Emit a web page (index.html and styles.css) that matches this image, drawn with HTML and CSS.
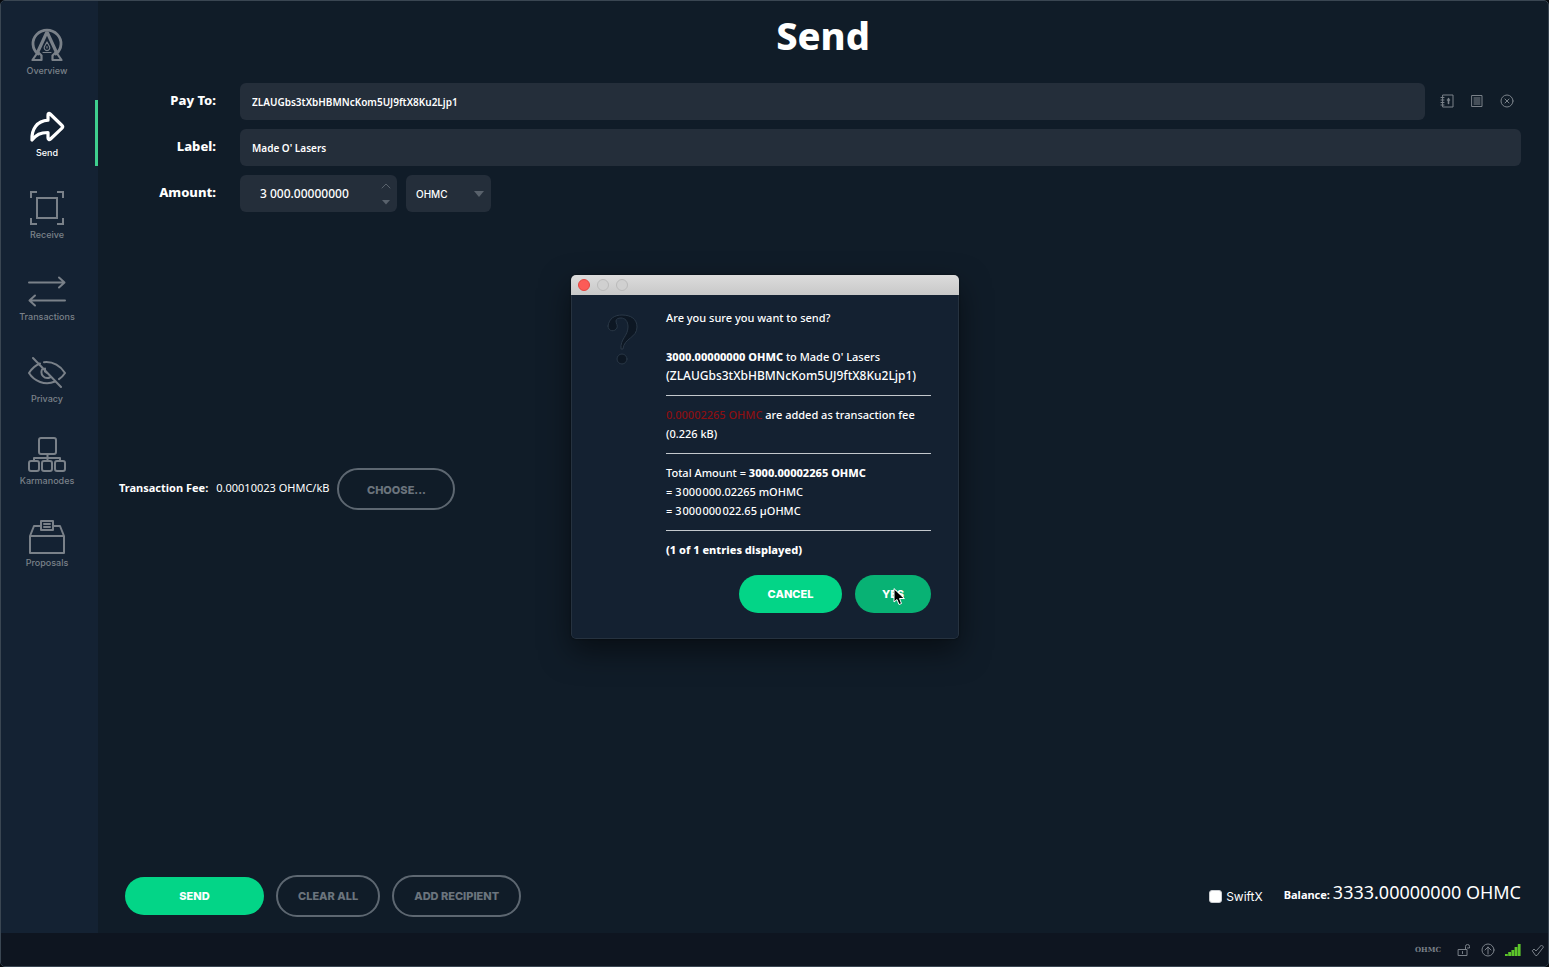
FILE: index.html
```
<!DOCTYPE html>
<html lang="en">
<head>
    <meta charset="UTF-8">
    <meta name="viewport" content="width=device-width, initial-scale=1.0">
    <title>OHMC Wallet - Send</title>
    <link rel="stylesheet" href="styles.css">
</head>
<body>
    <div class="window">
        <!-- Sidebar -->
        <nav class="sidebar">
            <a href="#" class="nav-item">
                <svg width="36" height="36" viewBox="0 0 36 36" stroke-width="2.8">
                    <path d="M9 27A14 13.500 0 1 1 27 27"/>
                    <path d="M17.500 6L8.500 25.500M18.500 6l9 19.500" stroke-width="3.200"/>
                    <path d="M9 25l-5.500 8h9v-4.500zM27 25l5.500 8h-9v-4.500z" stroke-width="2.200"/>
                    <path d="M18 15l-2.500 4.500a2.800 2.800 0 1 0 5 0zM18 19.500v1.500M14 25.500h8" stroke-width="1.200"/>
                </svg>
                <span>Overview</span>
            </a>
            <a href="#" class="nav-item active">
                <svg width="36" height="36" viewBox="0 0 36 36" stroke-width="3.200">
                    <path d="M19 6c0-1.500 1-2 2.200-1L33 16.500c1 1 1 1.700 0 2.600L21.500 30c-1.200 1-2.500.5-2.500-1v-5.500c-8 0-11.500 2-16 7.500C2.500 20 8 12 19 11.200z"/>
                </svg>
                <span>Send</span>
            </a>
            <a href="#" class="nav-item">
                <svg width="36" height="36" viewBox="0 0 36 36" stroke-width="2">
                    <path d="M2 7V1h6M28 1h6v6M34 27v6h-6M8 33H2v-6M8 7h20v20H8z" stroke-linecap="butt" stroke-linejoin="miter"/>
                </svg>
                <span>Receive</span>
            </a>
            <a href="#" class="nav-item">
                <svg width="38" height="36" viewBox="0 0 38 36" stroke-width="2">
                    <path d="M1 9.500h35M31 4.500l5.500 5-5.500 5M37 27.500H2M7 22.500l-5.500 5 5.500 5"/>
                </svg>
                <span>Transactions</span>
            </a>
            <a href="#" class="nav-item">
                <svg width="38" height="36" viewBox="0 0 38 36" stroke-width="2">
                    <path d="M5 3l28 29M12 8.500C7 10.500 3.500 14 1 18c5 8 16 13 26 8.500M16 7.200c9-1 17 4 21 10.800-1.500 2.300-3.500 4.500-6 6.200M14 14.500c-2 5 2 10 8 8M17 13.500v3l2 1.500"/>
                </svg>
                <span>Privacy</span>
            </a>
            <a href="#" class="nav-item">
                <svg width="38" height="36" viewBox="0 0 38 36" stroke-width="2">
                    <rect x="11" y="1" width="17" height="16" rx="2"/>
                    <rect x="1" y="24" width="10" height="10" rx="2"/>
                    <rect x="14" y="24" width="10" height="10" rx="2"/>
                    <rect x="27" y="24" width="10" height="10" rx="2"/>
                    <path d="M19.500 17v7M6 24v-3h26v3"/>
                </svg>
                <span>Karmanodes</span>
            </a>
            <a href="#" class="nav-item">
                <svg width="38" height="36" viewBox="0 0 38 36" stroke-width="2">
                    <path d="M2 17v17h34V17zl4-10h7M25 7h7l4 10M13 2h12v9H13zM16 5h6M16 8h6"/>
                </svg>
                <span>Proposals</span>
            </a>
        </nav>

        <!-- Send page -->
        <main class="content">
            <h1>Send</h1>

            <form class="send-form">
                <label for="payTo">Pay To:</label>
                <div class="field-row">
                    <input type="text" id="payTo" class="field" value="ZLAUGbs3tXbHBMNcKom5UJ9ftX8Ku2Ljp1">
                    <div class="field-tools">
                        <button type="button" aria-label="Address book">
                            <svg width="14" height="14" viewBox="0 0 14 14">
                                <path d="M3 1h10v12H3zM1 3.500h3M1 6h3M1 8.500h3M1 11h3"/>
                                <path d="M8.500 4.500v5M7.500 6h2" stroke-width="1.600"/>
                            </svg>
                        </button>
                        <button type="button" aria-label="Paste address">
                            <svg width="14" height="14" viewBox="0 0 14 14">
                                <path d="M2 1.500h10v11H2zM4 4h6M4 6h6M4 8h6M4 10h6"/>
                            </svg>
                        </button>
                        <button type="button" aria-label="Remove entry">
                            <svg width="14" height="14" viewBox="0 0 14 14">
                                <circle cx="7" cy="7" r="6"/>
                                <path d="M5 5l4 4M9 5l-4 4"/>
                            </svg>
                        </button>
                    </div>
                </div>

                <label for="label">Label:</label>
                <input type="text" id="label" class="field" value="Made O' Lasers">

                <label for="amount">Amount:</label>
                <div class="amount-row">
                    <div class="spin-box">
                        <input type="text" id="amount" class="field" value="3 000.00000000">
                        <div class="spin-buttons">
                            <button type="button" aria-label="Increase">
                                <svg width="10" height="6" viewBox="0 0 10 6"><path d="M1 5l4-4 4 4"/></svg>
                            </button>
                            <button type="button" aria-label="Decrease">
                                <svg width="10" height="6" viewBox="0 0 10 6"><path class="solid" d="M1 1h8L5 5.500z"/></svg>
                            </button>
                        </div>
                    </div>
                    <div class="unit-box">
                        <select class="field" aria-label="Unit">
                            <option>OHMC</option>
                            <option>mOHMC</option>
                            <option>µOHMC</option>
                        </select>
                        <svg width="10" height="6" viewBox="0 0 10 6"><path class="solid" d="M0 0h10L5 6z"/></svg>
                    </div>
                </div>
            </form>

            <div class="fee">
                <b>Transaction Fee:</b>
                <span>0.00010023 OHMC/kB</span>
                <button type="button" class="btn btn-outline btn-choose">CHOOSE...</button>
            </div>

            <div class="actions">
                <button type="button" class="btn btn-send">SEND</button>
                <button type="button" class="btn btn-outline">CLEAR ALL</button>
                <button type="button" class="btn btn-outline">ADD RECIPIENT</button>
                <label class="swiftx"><input type="checkbox"> SwiftX</label>
                <div class="balance"><b>Balance:</b> <span>3333.00000000 OHMC</span></div>
            </div>
        </main>

        <!-- Status bar -->
        <footer class="status-bar">
            <span class="unit">OHMC</span>
            <svg width="14" height="14" viewBox="0 0 14 14">
                <path d="M1.500 6.500H10v6H1.500zM5.500 8.500v2M8.500 6V3.500a2 2 0 0 1 4 0V5h-2"/>
            </svg>
            <svg width="14" height="14" viewBox="0 0 14 14">
                <circle cx="7" cy="7" r="6"/>
                <path d="M7 11V4M4 7l3-3 3 3"/>
            </svg>
            <svg class="signal" width="16" height="12" viewBox="0 0 16 12">
                <path d="M0 10h2.800v2H0zM3.200 8H6v4H3.200zM6.400 6h2.800v6H6.400zM9.600 3h2.800v9H9.600zM12.800 0h2.800v12h-2.800z"/>
            </svg>
            <svg width="14" height="14" viewBox="0 0 14 14">
                <path d="M1.500 7.500L3 6l2 2 5.500-6L12.500 4 6 12.500H5z"/>
            </svg>
        </footer>

        <!-- Confirmation dialog -->
        <div class="overlay">
            <div class="dialog" role="dialog" aria-label="Confirm send coins">
                <div class="title-bar">
                    <button type="button" class="dot dot-close" aria-label="Close"></button>
                    <button type="button" class="dot" aria-label="Minimize"></button>
                    <button type="button" class="dot" aria-label="Zoom"></button>
                </div>
                <div class="dialog-body">
                    <svg class="question" width="32" height="52" viewBox="0 0 32 52">
                        <path d="M1 12C2 4 8 1 15 1c9 0 15 4 15 12 0 11-13 11-14 22h-2c-1-10 7-13 7-22 0-6-3-9-7-9-3 0-5 1-5 3 0 3 2 4 1 7-2 4-9 4-9-2z"/>
                        <circle cx="15" cy="45" r="5"/>
                    </svg>
                    <div class="message">
                        <p class="ask">Are you sure you want to send?</p>
                        <p><b>3000.00000000 OHMC</b> to Made O' Lasers</p>
                        <p class="address">(ZLAUGbs3tXbHBMNcKom5UJ9ftX8Ku2Ljp1)</p>
                        <hr>
                        <p><span class="fee-amount">0.00002265 OHMC</span> are added as transaction fee</p>
                        <p>(0.226 kB)</p>
                        <hr>
                        <p>Total Amount = <b>3000.00002265 OHMC</b></p>
                        <p>= 3&#8202;000&#8202;000.02265 mOHMC</p>
                        <p>= 3&#8202;000&#8202;000&#8202;022.65 µOHMC</p>
                        <hr>
                        <p><b>(1 of 1 entries displayed)</b></p>
                        <div class="dialog-buttons">
                            <button type="button" class="btn btn-cancel">CANCEL</button>
                            <button type="button" class="btn btn-yes">YES
                                <svg class="cursor" width="12" height="18" viewBox="0 0 12 18">
                                    <path d="M1 1v13l3-2.500 2 5 2.500-1-2-5H11z"/>
                                </svg>
                            </button>
                        </div>
                    </div>
                </div>
            </div>
        </div>
    </div>
</body>
</html>
```
FILE: styles.css
```
* {
    margin: 0;
    padding: 0;
    box-sizing: border-box;
}

body {
    background-color: #05080c;
    color: #fff;
    font-family: 'Noto Sans', sans-serif;
    font-size: 11px;
}

button,
input,
select {
    font: inherit;
    color: inherit;
    border: none;
    background: none;
}

svg {
    fill: none;
    stroke: currentColor;
    stroke-linecap: round;
    stroke-linejoin: round;
    flex-shrink: 0;
}

.window {
    position: relative;
    display: grid;
    grid-template-columns: 97px 1fr;
    grid-template-rows: 1fr 33px;
    min-height: 100vh;
    border: 1px solid #3a4652;
    border-radius: 5px;
    background-color: #101c28;
    overflow: hidden;
}

/* Sidebar */
.sidebar {
    display: flex;
    flex-direction: column;
    gap: 16px;
    padding-top: 17px;
    background-color: #142233;
}

.nav-item {
    display: flex;
    flex-direction: column;
    align-items: center;
    gap: 2px;
    height: 66px;
    padding: 9px 2px 0 0;
    border-right: 3px solid transparent;
    color: #7a8189;
    font-family: Inter, sans-serif;
    font-size: 9px;
    font-weight: 500;
    line-height: 12px;
    text-decoration: none;
}

.nav-item.active {
    color: #fff;
    border-right-color: #3fcf8e;
}

/* Send page */
.content {
    display: flex;
    flex-direction: column;
    padding: 6px 27px 16px 21px;
}

h1 {
    padding-left: 6px;
    font-size: 38px;
    font-weight: 800;
    line-height: 56px;
    text-align: center;
}

.send-form {
    flex-grow: 7;
    display: grid;
    grid-template-columns: 97px 1fr;
    grid-auto-rows: 37px;
    gap: 9px 24px;
    margin-top: 20px;
}

.send-form > label {
    font-size: 13px;
    font-weight: 800;
    line-height: 34px;
    text-align: right;
}

.field {
    width: 100%;
    height: 37px;
    padding: 0 12px;
    border-radius: 6px;
    background-color: #242e3a;
    font-size: 10px;
    font-weight: 600;
}

.field-row {
    display: flex;
    align-items: center;
}

.field-tools {
    display: flex;
    gap: 16px;
    padding: 0 7px 2px 15px;
    color: #7a8189;
}

.field-tools button {
    display: flex;
}

.amount-row {
    display: flex;
    gap: 9px;
}

.spin-box {
    position: relative;
    width: 157px;
}

.spin-box .field {
    padding-left: 20px;
    font-size: 12px;
    font-weight: 500;
}

.spin-buttons {
    position: absolute;
    top: 8px;
    right: 6px;
    display: flex;
    flex-direction: column;
    gap: 10px;
    color: #59626c;
}

.spin-buttons button {
    display: flex;
}

.unit-box {
    position: relative;
    width: 85px;
}

.unit-box .field {
    appearance: none;
    padding: 0 10px;
    font-family: Inter, sans-serif;
    font-weight: 500;
}

.unit-box svg {
    position: absolute;
    top: 16px;
    right: 7px;
    color: #59626c;
}

.solid {
    fill: currentColor;
    stroke: none;
}

.fee {
    flex-grow: 10;
    display: flex;
    align-items: flex-start;
    gap: 8px;
    line-height: 40px;
}

.btn {
    height: 38px;
    border-radius: 21px;
    font-family: Inter, sans-serif;
    font-size: 11px;
    font-weight: 800;
}

.btn-outline {
    height: 42px;
    padding: 0 20px;
    border: 2px solid #5d6771;
    color: #6b747d;
}

.btn-choose {
    width: 118px;
}

.btn-send {
    width: 139px;
    background-color: #03d587;
}

.actions {
    display: flex;
    align-items: center;
    gap: 12px;
    padding-left: 6px;
}

.swiftx {
    display: flex;
    align-items: center;
    gap: 4px;
    margin-left: auto;
    font-family: Inter, sans-serif;
    font-size: 12px;
}

.swiftx input {
    appearance: none;
    width: 13px;
    height: 13px;
    border: 1px solid #c9ccd0;
    border-radius: 3px;
    background-color: #fff;
}

.balance {
    margin-left: 9px;
    padding-bottom: 5px;
    line-height: 24px;
}

.balance span {
    font-size: 18px;
}

/* Status bar */
.status-bar {
    grid-column: 1 / -1;
    display: flex;
    align-items: center;
    justify-content: flex-end;
    gap: 10px;
    padding-right: 3px;
    background-color: #0e1520;
    color: #7a8189;
}

.unit {
    margin-right: 6px;
    font-family: 'DejaVu Serif', serif;
    font-size: 7px;
    font-weight: 700;
}

.signal {
    fill: #5cc52a;
    stroke: none;
}

/* Confirmation dialog */
.overlay {
    position: absolute;
    inset: 0;
    display: flex;
    align-items: center;
    justify-content: center;
    padding: 0 19px 53px 0;
}

.dialog {
    width: 388px;
    border-radius: 5px;
    background-color: #142131;
    box-shadow: 0 12px 30px rgba(0, 0, 0, 0.5), 0 0 2px rgba(0, 0, 0, 0.6);
    overflow: hidden;
}

.title-bar {
    display: flex;
    align-items: center;
    gap: 7px;
    height: 20px;
    padding-left: 7px;
    background: linear-gradient(#dcdcdc, #c8c8c8);
}

.dot {
    width: 12px;
    height: 12px;
    border: 1px solid #bababa;
    border-radius: 50%;
    background-color: #d0d0d0;
}

.dot-close {
    border-color: #e2453f;
    background-color: #fc5b57;
}

.dialog-body {
    display: flex;
    gap: 27px;
    padding: 13px 27px 25px 35px;
    border: 1px solid #26323f;
    border-top: none;
    border-radius: 0 0 5px 5px;
}

.question {
    margin-top: 6px;
    fill: #0d1723;
    stroke: #2a3847;
}

.message {
    flex: 1;
    font-weight: 500;
    line-height: 19px;
}

.message b {
    font-weight: 800;
}

.message .ask {
    margin-bottom: 20px;
}

.message .address {
    font-size: 12px;
    white-space: nowrap;
}

.message hr {
    height: 1px;
    margin: 10px 0 9px;
    border: none;
    background-color: #c3c8cd;
}

.fee-amount {
    color: #8c0f12;
}

.dialog-buttons {
    display: flex;
    justify-content: flex-end;
    gap: 13px;
    margin-top: 16px;
}

.btn-cancel {
    width: 103px;
    background-color: #03d587;
}

.btn-yes {
    position: relative;
    width: 76px;
    background-color: #08b274;
}

.cursor {
    position: absolute;
    top: 13px;
    left: 38px;
    fill: #000;
    stroke: #fff;
}
```
